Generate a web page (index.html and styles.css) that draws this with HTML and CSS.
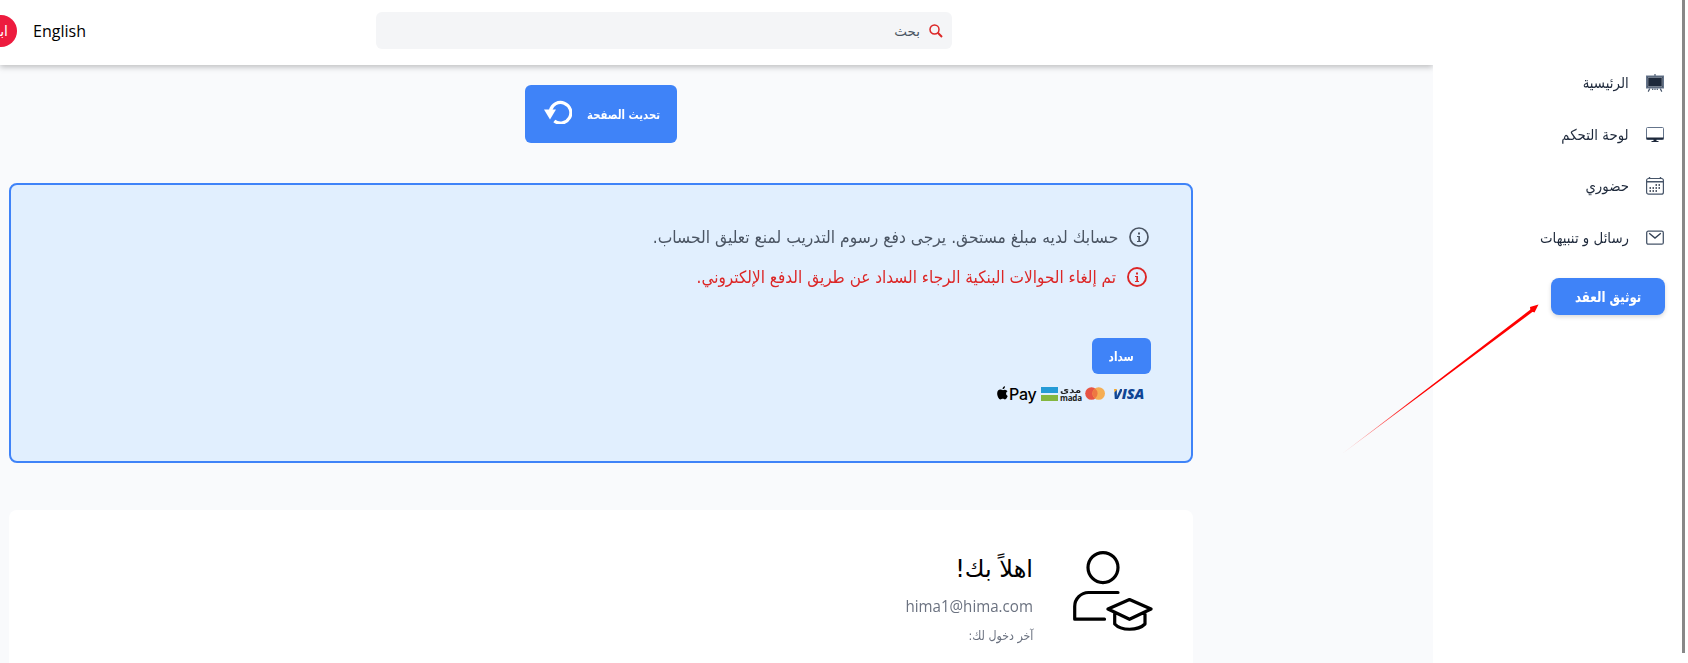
FILE: index.html
```html
<!DOCTYPE html>
<html lang="ar" dir="rtl">
<head>
<meta charset="utf-8">
<title>اهلاً بك</title>
<link rel="stylesheet" href="styles.css">
</head>
<body>
<div class="app">
  <aside class="sidebar">
    <nav class="menu">
      <a class="item"><svg class="ico" viewBox="0 0 18 18"><path d="M9 0v2M3.800 14.500L2.200 17.600M14.200 14.500l1.600 3.100M6.700 14.500v1.600M11.300 14.500v1.600M9 14.500v1.500" fill="none" stroke="#475569" stroke-width="1.200"/><path d="M.6 2.100h16.800v11.800H.6z" fill="#1e293b" stroke="#64748b" stroke-width="1.200"/><path d="M1.900 3.400h14.200v9.200H1.900z" fill="none" stroke="#a5afbd" stroke-width=".7"/></svg><span class="t">الرئيسية</span></a>
      <a class="item"><svg class="ico" viewBox="0 0 18 18"><rect x=".5" y="1.500" width="17" height="12" rx="1" fill="none" stroke="#64748b"/><path d="M.5 11.500h17v2H.5zM7.500 13.500h3v1.500h2v1h-7v-1h2z" fill="#1e293b"/></svg><span class="t">لوحة التحكم</span></a>
      <a class="item"><svg class="ico" viewBox="0 0 18 18"><rect x=".6" y="1.500" width="16.800" height="15.700" rx="2" fill="none" stroke="#475569" stroke-width="1.200"/><path d="M1 4.800h16M3.500 0v2M14.500 0v2" stroke="#475569" stroke-width="1.400"/><path d="M9.500 7.300h1.500v1.500H9.500zM12.500 7.300h1.500v1.500h-1.500zM3.500 10.300h1.500v1.500H3.500zM6.500 10.300h1.500v1.500H6.500zM9.500 10.300h1.500v1.500H9.500zM12.500 10.300h1.500v1.500h-1.500zM3.500 13.300h1.500v1.500H3.500zM6.500 13.300h1.500v1.500H6.500zM9.500 13.300h1.500v1.500H9.500z" fill="#1e293b"/></svg><span class="t">حضوري</span></a>
      <a class="item"><svg class="ico" viewBox="0 0 18 18"><rect x=".7" y="2.200" width="16.600" height="13" rx="1.500" fill="none" stroke="#475569" stroke-width="1.300"/><path d="M3.200 4.300L9 9l5.800-4.700" fill="none" stroke="#334155" stroke-width="1.400"/></svg><span class="t">رسائل و تنبيهات</span></a>
    </nav>
    <a class="btn contract"><span class="t">توثيق العقد</span></a>
  </aside>
  <main class="main">
    <header class="top">
      <div class="search"><svg class="mag" viewBox="0 0 14 14"><circle cx="5.500" cy="5.500" r="4.500" fill="none" stroke="#dc2626" stroke-width="1.500"/><path d="M8.800 8.800l4.200 4.200" stroke="#dc2626" stroke-width="2"/></svg><span class="t">بحث</span></div>
      <span class="lang">English</span>
      <div class="avatar"><span>ابـ</span></div>
    </header>
    <div class="content">
      <a class="btn refresh"><span class="t">تحديث الصفحة</span><svg class="reload" viewBox="0 0 28 24"><path d="M6.500 10.500A10.300 10.300 0 1 1 10.300 21" fill="none" stroke="#fff" stroke-width="3.200"/><path d="M0 9.500h12l-6 10z" fill="#fff"/></svg></a>
      <section class="notice">
        <p class="line"><svg class="info" viewBox="0 0 20 20"><circle cx="10" cy="10" r="9" fill="none" stroke="currentColor" stroke-width="1.700"/><path d="M9 5.500h2v2H9zM8 9h3v5h1v1H8v-1h1.300v-4H8z" fill="currentColor"/></svg><span class="t">حسابك لديه مبلغ مستحق. يرجى دفع رسوم التدريب لمنع تعليق الحساب.</span></p>
        <p class="line red"><svg class="info" viewBox="0 0 20 20"><circle cx="10" cy="10" r="9" fill="none" stroke="currentColor" stroke-width="1.900"/><path d="M9 5.500h2v2H9zM8 9h3v5h1v1H8v-1h1.300v-4H8z" fill="currentColor"/></svg><span class="t">تم إلغاء الحوالات البنكية الرجاء السداد عن طريق الدفع الإلكتروني.</span></p>
        <a class="btn pay"><span class="t">سداد</span></a>
        <div class="brands" dir="ltr">
          <span class="apple"><svg viewBox="0 0 12 15"><path d="M8.800 0C7 .2 6 1.500 6.100 3.200 7.700 3.200 8.900 1.700 8.800 0zM6.300 4.200C5.500 4.200 4.700 3.600 3.600 3.600 1.700 3.600.2 5.300.2 8c0 3 1.900 6.500 3.600 6.500.9 0 1.400-.6 2.500-.6s1.500.6 2.400.6c1.300 0 2.500-2.100 3-3.600-2.200-.9-2.400-4-.2-5.200-.7-1-1.700-1.800-2.900-1.800-1 0-1.600.5-2.300.5z"/></svg><b>Pay</b></span>
          <span class="mada"><i><s class="blue"></s><s class="green"></s></i><span class="words"><em class="ar">مدى</em><em>mada</em></span></span>
          <svg class="mc" viewBox="0 0 20 13"><circle cx="6.500" cy="6.500" r="6.300" fill="#e75445"/><circle cx="13.700" cy="6.500" r="6.300" fill="#f5ae54"/><path d="M10 1.400a6.300 6.300 0 0 1 0 10.200 6.300 6.300 0 0 1 0-10.200z" fill="#ee7742"/></svg>
          <span class="visa">VISA</span>
        </div>
      </section>
      <section class="welcome">
        <svg class="student" viewBox="0 0 80 80" fill="none" stroke="#000" stroke-width="3.200" stroke-linejoin="round" stroke-linecap="round"><circle cx="30" cy="16.600" r="15"/><path d="M45 41.500H15.500A14 14 0 0 0 1.700 55.500V68.200H31.500M35 58L56.500 48.500 78 58 56.500 68.300zM41.700 62.500V73C48 80 65 80 72 73V62.500"/></svg>
        <div class="who"><h1><span class="t">اهلاً بك!</span></h1><p class="mail" dir="ltr"><span>hima1@hima.com</span></p><p class="last"><span class="t">آخر دخول لك:</span></p></div>
      </section>
    </div>
  </main>
  <svg class="arrow" viewBox="0 0 200 150"><defs><linearGradient id="fade" gradientUnits="userSpaceOnUse" x1="2" y1="149" x2="75" y2="95"><stop offset="0" stop-color="red" stop-opacity=".3"/><stop offset="1" stop-color="red"/></linearGradient></defs><path d="M.5 149.500L189.500 4.800 191.300 7.300z" fill="url(#fade)"/><path d="M188 3L196.500.5 192.500 8.500 188.500 7z" fill="red"/></svg>
</div>
</body>
</html>
```
FILE: styles.css
```css
* { box-sizing: border-box; }
body { margin: 0; background: #fff; font-family: "DejaVu Sans", "Noto Sans", sans-serif; overflow: hidden; }
p, h1 { margin: 0; font-weight: 400; }
.app { position: relative; display: flex; width: 1688px; height: 663px; padding-right: 6px; overflow: hidden; }
.app::after { content: ""; position: absolute; right: 3px; top: 0; width: 3px; height: 653px; background: #888; }
.t { display: inline-block; white-space: nowrap; transform-origin: right center; }
.sidebar { width: 249px; padding: 65px 17px 0 0; flex: none; }
.menu { display: flex; flex-direction: column; }
.item { display: flex; align-items: center; gap: 17px; height: 51.5px; padding: 0 1px 15px 0; font-size: 15px; color: #1e293b; }
.item .t { transform: scaleX(.89); }
.ico { width: 18px; height: 18px; flex: none; }
.btn { display: flex; align-items: center; justify-content: center; background: #3f83f8; color: #fff; font-weight: 700; border-radius: 6px; }
.btn .t { transform-origin: center; }
.contract { width: 114px; height: 37px; margin-top: 7px; font-size: 15px; border-radius: 8px; box-shadow: 0 2px 4px rgba(0,0,0,.15); }
.contract .t { transform: scaleX(.785); }
.main { width: 1433px; background: #f9fafc; flex: none; }
.top { display: flex; align-items: center; height: 65px; padding: 0 481px 4px 0; background: #fff; box-shadow: 0 2px 6px rgba(0,0,0,.25); clip-path: inset(0 0 -12px 0); }
.search { display: flex; align-items: center; gap: 9px; width: 576px; height: 37px; padding-right: 9px; background: #f4f5f7; border-radius: 6px; color: #4b5563; font-size: 13.5px; flex: none; }
.mag { width: 14px; height: 14px; }
.lang { margin-right: 290px; width: 53px; font: 16px "Open Sans", sans-serif; color: #000; flex: none; }
.avatar { display: flex; align-items: center; width: 32px; height: 32px; margin-right: 16px; border-radius: 50%; background: #ed1b3e; color: #fff; font-size: 14px; padding-right: 9px; flex: none; }
.content { padding: 20px 240px 0 9px; display: flex; flex-direction: column; align-items: center; }
.refresh { width: 152px; height: 58px; gap: 15px; padding-right: 17px; justify-content: flex-start; font-size: 12.5px; }
.refresh .t { width: 73px; transform: scaleX(.81); transform-origin: right center; }
.reload { width: 28px; height: 24px; margin-bottom: 4px; flex: none; }
.notice { width: 1184px; height: 280px; margin-top: 40px; padding: 42px 40px 0; background: #e1effe; border: 2px solid #3f83f8; border-radius: 8px; }
.line { display: flex; align-items: center; gap: 11px; height: 20px; margin-bottom: 20px; padding-right: 2px; color: #4b5563; font-size: 17px; }
.line .t { transform: scaleX(.914); }
.line.red { color: #dc2626; padding-right: 4px; }
.line.red .t { transform: scaleX(.9); }
.info { width: 20px; height: 20px; flex: none; }
.pay { width: 59px; height: 36px; margin-top: 51px; font-size: 12.5px; }
.pay .t { transform: scaleX(.83); }
.brands { display: flex; align-items: center; justify-content: flex-end; height: 17px; margin-top: 11px; padding-right: 5px; }
.apple { display: flex; align-items: center; width: 44px; }
.apple svg { width: 11px; height: 14px; margin: -2px 1px 0 0; }
.apple b { font: 500 16px Inter, sans-serif; letter-spacing: -.3px; }
.mada { display: flex; gap: 2px; width: 44px; }
.mada i { display: flex; flex-direction: column; gap: 2px; }
.mada s { width: 17px; height: 6px; }
.blue { background: #259bd6; }
.green { background: #84b740; }
.words { display: flex; flex-direction: column; color: #222; }
.words em { font: 700 8px/7px "Open Sans", sans-serif; letter-spacing: -.2px; width: 21px; }
.words .ar { font: 700 8px/7px "DejaVu Sans", sans-serif; letter-spacing: 0; transform: scaleX(1.25); transform-origin: left center; }
.mc { width: 20px; height: 13px; margin-right: 8px; }
.visa { font: italic 800 14.5px/15px "Open Sans", sans-serif; letter-spacing: -.2px; color: #0f4595; width: 33px; }
.visa::first-letter { color: transparent; background: linear-gradient(135deg, #f0a52b 35%, #0f4595 36%); -webkit-background-clip: text; background-clip: text; }
.welcome { display: flex; width: 1184px; height: 200px; margin-top: 47px; padding: 41px 40px 0 0; gap: 40px; background: #fff; border-radius: 8px; }
.student { width: 80px; height: 80px; }
.who { display: flex; flex-direction: column; }
.who h1 { font-size: 24px; height: 40px; line-height: 36px; color: #000; }
.mail { font: 16px/30px "Open Sans", sans-serif; color: #6b7280; text-align: right; }
.mail span { display: inline-block; transform: scaleX(.945); transform-origin: right center; }
.last { font-size: 12.5px; line-height: 30px; color: #6b7280; }
.last .t { transform: scaleX(.885); }
.arrow { position: absolute; left: 1342px; top: 304px; width: 200px; height: 150px; }
```
